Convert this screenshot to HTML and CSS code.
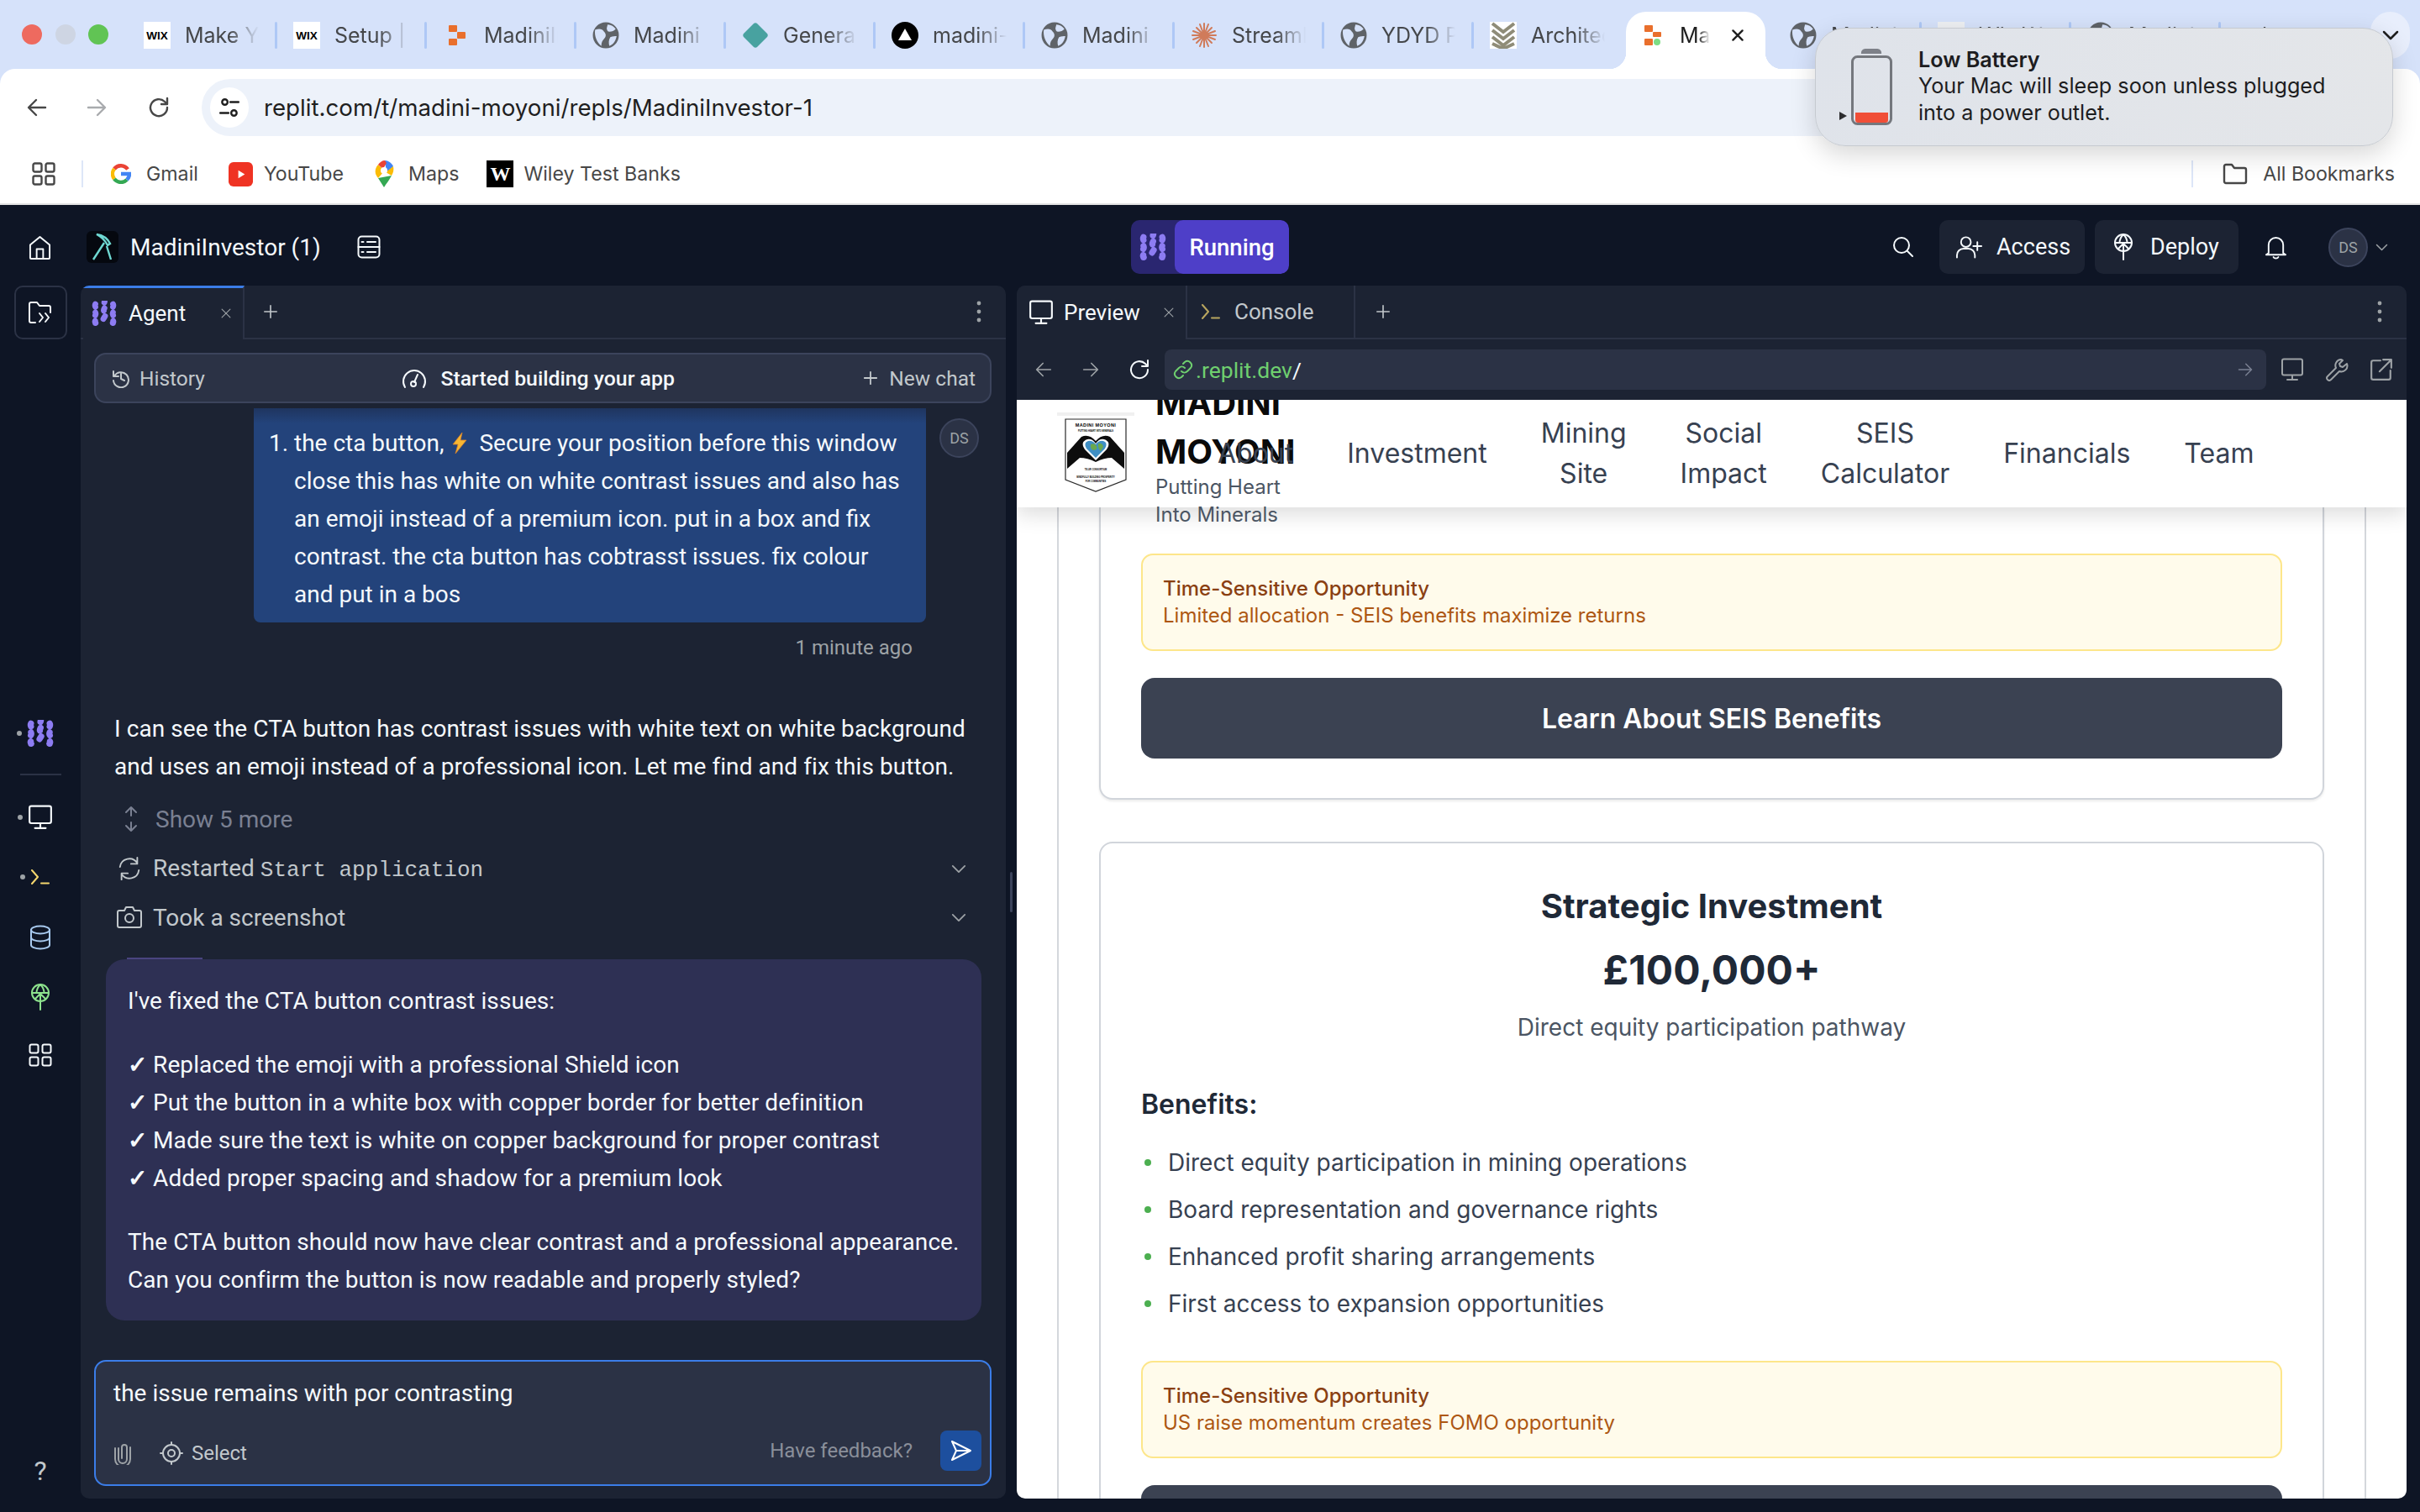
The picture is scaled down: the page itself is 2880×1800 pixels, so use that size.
FILE: index.html
```html
<!DOCTYPE html>
<html lang="en">
<head>
    <meta charset="UTF-8">
    <title>MadiniInvestor (1) - Replit</title>
    <link rel="stylesheet" href="styles.css">
</head>
<body>

<svg class="sprite" aria-hidden="true">
    <symbol id="i-agent" viewBox="0 0 30 30">
        <g fill="none" stroke="currentColor" stroke-width="6.8" stroke-linecap="round" stroke-dasharray="3.4 6.900">
            <path d="M4.5 4c-1.500 3 1.500 3.500 0 6.500s1.500 3.500 0 6.500 1.500 3.500 0 6.500 1.500 3 0 3"/>
            <path d="M15 -1c2 3-2 4 0 7s-2 4 0 7 2 4 0 7-2 4 0 7"/>
            <path d="M25.500 4c1.500 3-1.500 3.500 0 6.500s-1.500 3.500 0 6.500-1.500 3.500 0 6.500-1.500 3 0 3"/>
        </g>
    </symbol>
    <symbol id="i-home" viewBox="0 0 28 30"><path d="M2 12 14 2l12 10v16a1 1 0 0 1-1 1H3a1 1 0 0 1-1-1zM10 29V17h8v12"/></symbol>
    <symbol id="i-server" viewBox="0 0 28 28"><rect x="1.5" y="1.5" width="25" height="25" rx="4"/><path d="M1.5 14h25M5.500 8h2M12 8h10M5.500 20h2M12 20h10"/></symbol>
    <symbol id="i-folder" viewBox="0 0 30 26"><path d="M9 25H4a2 2 0 0 1-2-2V3a2 2 0 0 1 2-2h7l3 4h11a2 2 0 0 1 2 2v6M14 14l4 5-4 5M21 14l4 5-4 5"/></symbol>
    <symbol id="i-plus" viewBox="0 0 20 20"><path d="M10 2v16M2 10h16"/></symbol>
    <symbol id="i-close" viewBox="0 0 20 20"><path d="m3 3 14 14M17 3 3 17"/></symbol>
    <symbol id="i-more" viewBox="0 0 6 26"><g fill="currentColor" stroke="none"><circle cx="3" cy="3" r="2.4"/><circle cx="3" cy="13" r="2.4"/><circle cx="3" cy="23" r="2.4"/></g></symbol>
    <symbol id="i-history" viewBox="0 0 24 24"><path d="M3 4v6h6M4 10a9 9 0 1 1-1 5M12 7v6l4 2"/></symbol>
    <symbol id="i-gauge" viewBox="0 0 30 26"><path d="M4 24A13 13 0 1 1 26 24M19 9l-4 9"/><circle cx="14" cy="20" r="3"/></symbol>
    <symbol id="i-monitor" viewBox="0 0 28 28"><rect x="2" y="1.5" width="24" height="19" rx="2"/><path d="M14 21v4M8 26h12"/></symbol>
    <symbol id="i-term" viewBox="0 0 24 18"><path d="m2 1 7 8-7 8M13 16.500h9"/></symbol>
    <symbol id="i-db" viewBox="0 0 26 30"><ellipse cx="13" cy="6" rx="11" ry="4.5"/><path d="M2 6v18c0 2.500 5 4.500 11 4.500S24 26.500 24 24V6M2 15c0 2.500 5 4.500 11 4.500S24 17.500 24 15"/></symbol>
    <symbol id="i-deploy" viewBox="0 0 24 32"><circle cx="12" cy="11" r="10"/><path d="M2 11h20M12 1c-3 3-4.500 6-4.500 10M12 1c3 3 4.500 6 4.500 10M12 31V12M6 18l6-6 6 6"/></symbol>
    <symbol id="i-grid" viewBox="0 0 28 28"><rect x="1.5" y="1.5" width="10" height="10" rx="2"/><rect x="16.5" y="1.5" width="10" height="10" rx="2"/><rect x="1.5" y="16.5" width="10" height="10" rx="2"/><rect x="16.5" y="16.5" width="10" height="10" rx="2"/></symbol>
    <symbol id="i-updown" viewBox="0 0 18 32"><path d="M9 2v10M3 8l6-6 6 6M9 20v10M3 24l6 6 6-6"/></symbol>
    <symbol id="i-restart" viewBox="0 0 32 32"><path d="M4 14A12 12 0 0 1 26 9M28 18A12 12 0 0 1 6 23M26 2v8h-8M6 30v-8h8"/></symbol>
    <symbol id="i-camera" viewBox="0 0 32 28"><path d="M4 6h6l2-4h8l2 4h6a2 2 0 0 1 2 2v16a2 2 0 0 1-2 2H4a2 2 0 0 1-2-2V8a2 2 0 0 1 2-2z"/><circle cx="16" cy="15" r="5"/></symbol>
    <symbol id="i-chev" viewBox="0 0 20 12"><path d="m2 2 8 8 8-8"/></symbol>
    <symbol id="i-clip" viewBox="0 0 22 28"><path d="M6 8v13a5 5 0 0 0 10 0V7a3 3 0 0 0-6 0v13"/><path d="M2 8v13a9 9 0 0 0 18 0V7"/></symbol>
    <symbol id="i-target" viewBox="0 0 28 28"><circle cx="14" cy="14" r="10"/><circle cx="14" cy="14" r="4"/><path d="M14 1v3M14 24v3M1 14h3M24 14h3"/></symbol>
    <symbol id="i-send" viewBox="0 0 28 28"><path d="M3 3 25 14 3 25l5-11zM8 14h17"/></symbol>
    <symbol id="i-search" viewBox="0 0 26 26"><circle cx="11" cy="11" r="9"/><path d="m18 18 6 6"/></symbol>
    <symbol id="i-user-plus" viewBox="0 0 34 28"><circle cx="13" cy="8" r="6"/><path d="M2 27v-3a8 8 0 0 1 8-8h6a8 8 0 0 1 8 8v3M27 8v10M22 13h10"/></symbol>
    <symbol id="i-bell" viewBox="0 0 28 30"><path d="M5 22V12a9 9 0 0 1 18 0v10l3 2H2zM11 27c1 2 5 2 6 0"/></symbol>
    <symbol id="i-back" viewBox="0 0 24 24"><path d="M22 12H3M11 3l-9 9 9 9"/></symbol>
    <symbol id="i-reload" viewBox="0 0 28 28"><path d="M24 14a10 10 0 1 1-3-7l3 3M24 3v7h-7"/></symbol>
    <symbol id="i-link" viewBox="0 0 24 24"><path d="M10 14a5 5 0 0 0 7 0l4-4a5 5 0 0 0-7-7l-2 2M14 10a5 5 0 0 0-7 0l-4 4a5 5 0 0 0 7 7l2-2"/></symbol>
    <symbol id="i-wrench" viewBox="0 0 28 28"><path d="M19 2a7 7 0 0 0-6 10L3 22a2.500 2.500 0 0 0 4 4l10-10a7 7 0 0 0 9-9l-5 4-3-1-1-3 4-4a7 7 0 0 0-2-1z"/></symbol>
    <symbol id="i-external" viewBox="0 0 26 26"><path d="M12 3H4a2 2 0 0 0-2 2v17a2 2 0 0 0 2 2h17a2 2 0 0 0 2-2v-8M15 2h9v9M24 2 11 15"/></symbol>
    <symbol id="i-globe" viewBox="0 0 30 30"><circle cx="15" cy="15" r="14.5" fill="#5f6368" stroke="none"/><path fill="#d6e2fa" stroke="none" d="M3 9c5-2 8-1 10 2 2 2 3 5 0 8-2 2-3 4-3 8-5-4-8-11-7-18zM17 3c4 0 7 2 9 5-2 2-4 3-7 3-2 0-3-2-3-4zM20 17c3-1 5-1 7-1-1 5-3 9-8 11-1-3-1-7 1-10z"/></symbol>
    <symbol id="i-replit" viewBox="0 0 22 24"><g fill="#e96f2c"><rect x="0" y="0" width="10" height="8" rx="1"/><rect x="10" y="8" width="10" height="8" rx="1"/><rect x="0" y="16" width="10" height="8" rx="1"/></g></symbol>
</svg>

<!-- browser chrome -->
<header class="browser">
    <div class="tabstrip">
        <div class="lights"><i class="red"></i><i class="grey"></i><i class="green"></i></div>

        <div class="tab"><span class="fav fav-wix">WIX</span><span class="tab-title">Make Yo</span></div>
        <div class="tab"><span class="fav fav-wix">WIX</span><span class="tab-title">Setup |</span></div>
        <div class="tab"><svg class="fav"><use href="#i-replit" x="7" y="4" width="22" height="24"/></svg><span class="tab-title">MadiniIn</span></div>
        <div class="tab"><svg class="fav"><use href="#i-globe"/></svg><span class="tab-title">Madini I</span></div>
        <div class="tab">
            <svg class="fav" viewBox="0 0 32 32"><path fill="#48a2a0" d="M14 2c1-1 3-1 4 0l12 12c1 1 1 3 0 4L18 30c-1 1-3 1-4 0L2 18c-1-1-1-3 0-4z"/></svg>
            <span class="tab-title">General</span>
        </div>
        <div class="tab">
            <svg class="fav" viewBox="0 0 32 32"><circle cx="16" cy="16" r="16" fill="#000"/><path fill="#fff" d="m16 8 8 14H8z"/></svg>
            <span class="tab-title">madini-</span>
        </div>
        <div class="tab"><svg class="fav"><use href="#i-globe"/></svg><span class="tab-title">Madini I</span></div>
        <div class="tab">
            <svg class="fav" viewBox="0 0 32 32" stroke="#d07b5a" stroke-width="2" stroke-linecap="round"><path d="M16 2v28M2 16h28M7 7l18 18M25 7 7 25M11 3l10 26M21 3l-10 26M3 11l26 10M29 11 3 21"/></svg>
            <span class="tab-title">Streaml</span>
        </div>
        <div class="tab"><svg class="fav"><use href="#i-globe"/></svg><span class="tab-title">YDYD P</span></div>
        <div class="tab no-sep">
            <svg class="fav fav-white" viewBox="0 0 32 32" fill="none" stroke="#8f8c78" stroke-width="4"><path d="M3 2l13 10L29 2M3 10l13 10 13-10M3 18l13 10 13-10M3 26l13 6 13-6"/></svg>
            <span class="tab-title">Architec</span>
        </div>

        <div class="tab-active">
            <svg class="fav-small" viewBox="0 0 22 24"><g fill="#e96f2c"><rect width="10" height="8" rx="1"/><rect x="10" y="8" width="10" height="6" rx="1"/><rect y="16" width="10" height="8" rx="1"/></g><circle cx="15" cy="20" r="4" fill="#7ddc84"/></svg>
            <span class="tab-title">Mac</span>
            <svg class="ic tab-x"><use href="#i-close"/></svg>
        </div>

        <div class="tab after-active"><svg class="fav"><use href="#i-globe"/></svg><span class="tab-title">Madini</span></div>
        <div class="tab"><span class="fav fav-blank"></span><span class="tab-title">Wix W</span></div>
        <div class="tab"><svg class="fav"><use href="#i-globe"/></svg><span class="tab-title">Madini</span></div>
        <div class="tab no-sep"><span class="tab-title tab-hidden">l</span></div>

        <div class="tab-menu"><svg class="ic"><use href="#i-chev"/></svg></div>
    </div>

    <div class="navbar">
        <svg class="ic nav-ic"><use href="#i-back"/></svg>
        <svg class="ic nav-ic fwd"><use href="#i-back"/></svg>
        <svg class="ic nav-ic reload"><use href="#i-reload"/></svg>
        <div class="omnibox">
            <span class="site-info">
                <svg viewBox="0 0 24 24" class="ic"><circle cx="7" cy="6" r="3"/><path d="M13 6h9M2 18h9"/><circle cx="17" cy="18" r="3"/></svg>
            </span>
            <span class="url">replit.com/t/madini-moyoni/repls/MadiniInvestor-1</span>
        </div>
    </div>

    <div class="bookmarks">
        <svg class="ic bm-apps"><use href="#i-grid"/></svg>
        <span class="bm-sep"></span>
        <a class="bm bm-gmail">
            <svg class="bm-ic" viewBox="0 0 24 24" fill="none" stroke-width="4.5">
                <path stroke="#ea4335" d="M20 6.500A10 10 0 0 0 4 6"/><path stroke="#fbbc05" d="M4 6a10 10 0 0 0 0 12"/><path stroke="#34a853" d="M4 18a10 10 0 0 0 15 1"/><path stroke="#4285f4" d="M19 19c2-2 3-4 3-7H12"/>
            </svg>Gmail</a>
        <a class="bm bm-yt">
            <svg class="bm-ic yt" viewBox="0 0 30 30"><rect width="30" height="30" rx="6" fill="#ef3323"/><path fill="#fff" d="m12 10 8 5-8 5z"/></svg>YouTube</a>
        <a class="bm bm-maps">
            <svg class="bm-ic maps" viewBox="0 0 24 32">
                <path fill="#34a853" d="M5 21 12 32c3-5 6-8 9-14z"/><path fill="#fbbc05" d="M2 16c1 2 2 4 3 5l8-9-8-7c-3 3-4 7-3 11z"/><path fill="#4285f4" d="M13 0c4 0 8 3 10 7l-8 8z"/><path fill="#ea4335" d="M5 5c2-3 5-5 8-5l2 3-4 7z"/><path fill="#fbbc05" d="M23 7c1 4 0 8-2 11l-7-4z"/><circle cx="12" cy="12" r="4" fill="#fff"/>
            </svg>Maps</a>
        <a class="bm"><span class="bm-wiley">W</span>Wiley Test Banks</a>
        <span class="bm-sep bm-sep-end"></span>
        <a class="bm bm-all">
            <svg class="ic bm-folder" viewBox="0 0 30 26"><path d="M2 4a2 2 0 0 1 2-2h7l3 4h12a2 2 0 0 1 2 2v14a2 2 0 0 1-2 2H4a2 2 0 0 1-2-2z"/></svg>All Bookmarks</a>
    </div>
</header>

<!-- low battery notification -->
<aside class="notice">
    <svg class="battery" viewBox="0 0 64 92">
        <path fill="#7d8088" d="M31 0h14a5 5 0 0 1 5 6H26a5 5 0 0 1 5-6z"/>
        <rect x="15.5" y="9.5" width="46" height="80" rx="6" fill="none" stroke="#74777d" stroke-width="3"/>
        <path fill="#f04e37" d="M19 76h39v9a3 3 0 0 1-3 3H22a3 3 0 0 1-3-3z"/>
        <path fill="#2c2c2e" d="m0 75 9 5-9 5z"/>
    </svg>
    <div>
        <p class="notice-title">Low Battery</p>
        <p class="notice-body">Your Mac will sleep soon unless plugged<br>into a power outlet.</p>
    </div>
</aside>

<!-- replit workspace -->
<div class="app">
    <div class="topbar">
        <div class="top-left">
            <svg class="ic ic-home"><use href="#i-home"/></svg>
            <span class="repl-logo">
                <svg viewBox="0 0 38 38" fill="none" stroke="#6fd8d2" stroke-width="2.4"><path d="M12 4c7 1 13 5 16 11l-3 2C22 11 18 7 12 4zM21 14 8 34M24 18l5 16"/></svg>
            </span>
            <span class="repl-name">MadiniInvestor (1)</span>
            <svg class="ic ic-server"><use href="#i-server"/></svg>
        </div>

        <div class="run-pill">
            <span class="run-ic"><svg><use href="#i-agent"/></svg></span>
            <span class="run-label">Running</span>
        </div>

        <div class="top-right">
            <svg class="ic ic-search"><use href="#i-search"/></svg>
            <div class="top-btn"><svg class="ic ic-access"><use href="#i-user-plus"/></svg>Access</div>
            <div class="top-btn btn-deploy"><svg class="ic ic-deploy"><use href="#i-deploy"/></svg>Deploy</div>
            <svg class="ic ic-bell"><use href="#i-bell"/></svg>
            <span class="avatar avatar-top">DS</span>
            <svg class="ic ic-chev-top"><use href="#i-chev"/></svg>
        </div>
    </div>

    <div class="workspace">
        <nav class="rail">
            <div class="rail-tile"><svg class="ic"><use href="#i-folder"/></svg></div>
            <div class="rail-item dot agent-link"><svg><use href="#i-agent"/></svg></div>
            <div class="rail-line"></div>
            <div class="rail-item dot monitor-link"><svg class="ic"><use href="#i-monitor"/></svg></div>
            <div class="rail-item dot term-link"><svg class="ic"><use href="#i-term"/></svg></div>
            <div class="rail-item db-link"><svg class="ic"><use href="#i-db"/></svg></div>
            <div class="rail-item deploy-link"><svg class="ic"><use href="#i-deploy"/></svg></div>
            <div class="rail-item grid-link"><svg class="ic"><use href="#i-grid"/></svg></div>
            <div class="rail-help">?</div>
        </nav>

        <section class="panel agent-panel">
            <div class="panel-tabs">
                <div class="ptab agent-tab">
                    <svg class="agent-ic"><use href="#i-agent"/></svg>
                    <span>Agent</span>
                    <svg class="ic ptab-x"><use href="#i-close"/></svg>
                </div>
                <svg class="ic ptab-plus"><use href="#i-plus"/></svg>
                <svg class="ic ptab-more"><use href="#i-more"/></svg>
            </div>

            <div class="history-bar">
                <span class="hb-side"><svg class="ic"><use href="#i-history"/></svg>History</span>
                <span class="hb-title"><svg class="ic hb-gauge"><use href="#i-gauge"/></svg>Started building your app</span>
                <span class="hb-side"><svg class="ic hb-plus"><use href="#i-plus"/></svg>New chat</span>
            </div>

            <div class="msg-row">
                <div class="bubble">
                    <ol>
                        <li>the cta button,<svg class="bolt" viewBox="0 0 21 25"><path fill="#f7b733" stroke="#d9822b" stroke-width="0.8" d="M14 0 3 14h6L6 25 19 9h-7z"/></svg> Secure your position before this window close this has white on white contrast issues and also has an emoji instead of a premium icon. put in a box and fix contrast. the cta button has cobtrasst issues. fix colour and put in a bos</li>
                    </ol>
                </div>
                <span class="avatar avatar-msg">DS</span>
            </div>
            <p class="msg-time">1 minute ago</p>

            <p class="agent-text">I can see the CTA button has contrast issues with white text on white background<br>and uses an emoji instead of a professional icon. Let me find and fix this button.</p>

            <div class="step step-more"><svg class="ic step-ud"><use href="#i-updown"/></svg>Show 5 more</div>
            <div class="step step-restart">
                <svg class="ic step-ic"><use href="#i-restart"/></svg>
                <span>Restarted <code>Start application</code></span>
                <svg class="ic step-chev"><use href="#i-chev"/></svg>
            </div>
            <div class="step step-shot">
                <svg class="ic step-ic"><use href="#i-camera"/></svg>
                <span>Took a screenshot</span>
                <svg class="ic step-chev"><use href="#i-chev"/></svg>
            </div>

            <div class="card-tick"></div>
            <div class="agent-card">
                <p>I've fixed the CTA button contrast issues:</p>
                <p><b class="tick">✓</b> Replaced the emoji with a professional Shield icon<br>
                   <b class="tick">✓</b> Put the button in a white box with copper border for better definition<br>
                   <b class="tick">✓</b> Made sure the text is white on copper background for proper contrast<br>
                   <b class="tick">✓</b> Added proper spacing and shadow for a premium look</p>
                <p>The CTA button should now have clear contrast and a professional appearance.<br>
                   Can you confirm the button is now readable and properly styled?</p>
            </div>

            <div class="composer">
                <div class="composer-text">the issue remains with por contrasting</div>
                <div class="composer-row">
                    <svg class="ic ic-clip"><use href="#i-clip"/></svg>
                    <svg class="ic ic-target"><use href="#i-target"/></svg>
                    <span class="composer-select">Select</span>
                    <span class="composer-feedback">Have feedback?</span>
                    <span class="send-btn"><svg class="ic"><use href="#i-send"/></svg></span>
                </div>
            </div>
        </section>

        <div class="gutter"><span class="gutter-grip"></span></div>

        <section class="panel preview-panel">
            <div class="panel-tabs">
                <div class="ptab preview-tab">
                    <svg class="ic pv-monitor"><use href="#i-monitor"/></svg>
                    <span>Preview</span>
                    <svg class="ic ptab-x"><use href="#i-close"/></svg>
                </div>
                <div class="ptab console-tab">
                    <svg class="ic pv-term"><use href="#i-term"/></svg>
                    <span>Console</span>
                </div>
                <svg class="ic ptab-plus"><use href="#i-plus"/></svg>
                <svg class="ic ptab-more"><use href="#i-more"/></svg>
            </div>

            <div class="pv-urlrow">
                <svg class="ic pv-nav"><use href="#i-back"/></svg>
                <svg class="ic pv-nav pv-fwd"><use href="#i-back"/></svg>
                <svg class="ic pv-reload"><use href="#i-reload"/></svg>
                <div class="pv-url">
                    <svg class="ic pv-link"><use href="#i-link"/></svg>
                    <span class="pv-host">.replit.dev</span><span class="pv-path">/</span>
                    <svg class="ic pv-go"><use href="#i-back"/></svg>
                </div>
                <svg class="ic pv-tool"><use href="#i-monitor"/></svg>
                <svg class="ic pv-tool"><use href="#i-wrench"/></svg>
                <svg class="ic pv-tool"><use href="#i-external"/></svg>
            </div>

            <!-- the previewed site -->
            <div class="site">
                <div class="site-header">
                    <div class="logo-box">
                        <svg class="logo" viewBox="0 0 74 88">
                            <path d="M1 1h72v72L37 87 1 73z" fill="#fff" stroke="#2a2a2a" stroke-width="1.2"/>
                            <text x="37" y="10" class="logo-t1">MADINI MOYONI</text>
                            <text x="37" y="16" class="logo-t2">PUTTING HEART INTO MINERALS</text>
                            <path fill="#0d0d0d" d="M3 41 20 22q9-4 17 5 8-9 17-5l17 19v19L56 47q-9 0-19 5-10-5-19-5L3 60z"/>
                            <path fill="#fff" d="M37 50 24 37q-6-9 3-12 6-1 10 5 4-6 10-5 9 3 3 12z"/>
                            <path fill="#3f8fc4" d="M37 47 26 36q-4-7 2-9 5-1 9 4 4-5 9-4 6 2 2 9z"/>
                            <path fill="#6aa84f" d="M31 31q5-2 7 2t-3 5q-5-1-4-7zM40 30q5-1 6 4l-3 5q-4-3-3-9z"/>
                            <text x="37" y="62" class="logo-t2">TE-UR CONSORTIUM</text>
                            <text x="37" y="71" class="logo-t2">MINDFULLY BUILDING PROSPERITY</text>
                            <text x="37" y="76" class="logo-t2">FOR COMMUNITIES</text>
                        </svg>
                    </div>
                    <div class="brand-text">
                        <div class="brand-name">MADINI<br>MOYONI</div>
                        <div class="brand-tag">Putting Heart<br>Into Minerals</div>
                    </div>
                    <div class="site-nav">
                        <a>About</a>
                        <a>Investment</a>
                        <a>Mining<br>Site</a>
                        <a>Social<br>Impact</a>
                        <a>SEIS<br>Calculator</a>
                        <a>Financials</a>
                        <a>Team</a>
                    </div>
                </div>

                <div class="site-body">
                    <div class="site-wrap">
                        <div class="tier tier-first">
                            <div class="alert">
                                <p class="alert-title">Time-Sensitive Opportunity</p>
                                <p class="alert-text">Limited allocation - SEIS benefits maximize returns</p>
                            </div>
                            <div class="cta">Learn About SEIS Benefits</div>
                        </div>

                        <div class="tier">
                            <h3 class="tier-name">Strategic Investment</h3>
                            <div class="tier-amount">£100,000+</div>
                            <p class="tier-sub">Direct equity participation pathway</p>
                            <h4 class="tier-h4">Benefits:</h4>
                            <ul class="tier-list">
                                <li>Direct equity participation in mining operations</li>
                                <li>Board representation and governance rights</li>
                                <li>Enhanced profit sharing arrangements</li>
                                <li>First access to expansion opportunities</li>
                            </ul>
                            <div class="alert">
                                <p class="alert-title">Time-Sensitive Opportunity</p>
                                <p class="alert-text">US raise momentum creates FOMO opportunity</p>
                            </div>
                            <div class="cta"></div>
                        </div>
                    </div>
                </div>
            </div>
        </section>
    </div>
</div>

</body>
</html>
```

FILE: styles.css
```css
* {
    box-sizing: border-box;
}

html, body {
    margin: 0;
    padding: 0;
}

body {
    width: 2880px;
    height: 1800px;
    overflow: hidden;
    position: relative;
    background-color: #0e1525;
    font-family: "Inter", sans-serif;
    display: flex;
    flex-direction: column;
}

p, h3, h4, ul, ol {
    margin: 0;
    padding: 0;
}

.sprite {
    width: 0;
    height: 0;
    display: block;
}

.ic {
    fill: none;
    stroke: currentColor;
    stroke-width: 2;
    stroke-linecap: round;
    stroke-linejoin: round;
    flex-shrink: 0;
}

/* browser chrome */
.browser {
    background-color: #d6e2fa;
    flex-shrink: 0;
}

.tabstrip {
    height: 82px;
    display: flex;
    align-items: flex-start;
}

.lights {
    display: flex;
    gap: 15.5px;
    padding: 29px 23px 0 26px;
}

.lights i {
    display: block;
    width: 24px;
    height: 24px;
    border-radius: 50%;
}

.lights .red { background-color: #ee6a5f; }
.lights .grey { background-color: #ced5e3; }
.lights .green { background-color: #61c454; }

.tab {
    width: 178px;
    height: 32px;
    margin-top: 26px;
    padding-left: 19px;
    display: flex;
    align-items: center;
    gap: 17px;
    flex-shrink: 0;
    font-size: 25px;
    color: #45474a;
}

.tab::after {
    content: "";
    width: 3px;
    height: 32px;
    margin-left: auto;
    background-color: #aec8f6;
    border-radius: 2px;
    flex-shrink: 0;
}

.tab.no-sep::after {
    display: none;
}

.after-active {
    margin-left: 8px;
    padding-left: 21px;
}

.fav {
    width: 32px;
    height: 32px;
    flex-shrink: 0;
}

.fav-wix {
    background-color: #fff;
    color: #000;
    font: 700 13.5px "Liberation Sans", sans-serif;
    display: flex;
    align-items: center;
    justify-content: center;
}

.fav-white {
    background-color: #fff;
}

.fav-blank {
    background-color: #eef0f3;
}

.tab-title {
    width: 88px;
    overflow: hidden;
    white-space: nowrap;
    -webkit-mask-image: linear-gradient(90deg, #000 60%, transparent 100%);
    mask-image: linear-gradient(90deg, #000 60%, transparent 100%);
}

.tab-hidden {
    margin-left: 30px;
}

.tab-active {
    position: relative;
    width: 166px;
    height: 68px;
    margin: 14px 0 0 3px;
    padding: 0 0 13px 22px;
    background-color: #fff;
    border-radius: 24px 24px 0 0;
    display: flex;
    align-items: center;
    flex-shrink: 0;
    font-size: 25px;
    color: #1f1f1f;
}

.tab-active::before,
.tab-active::after {
    content: "";
    position: absolute;
    bottom: 0;
    width: 20px;
    height: 20px;
}

.tab-active::before {
    left: -20px;
    background: radial-gradient(circle at 0 0, transparent 20px, #fff 20.5px);
}

.tab-active::after {
    right: -20px;
    background: radial-gradient(circle at 100% 0, transparent 20px, #fff 20.5px);
}

.fav-small {
    width: 22px;
    height: 24px;
    flex-shrink: 0;
}

.tab-active .tab-title {
    width: 36px;
    margin-left: 20px;
}

.tab-x {
    width: 16px;
    height: 16px;
    margin-left: 25px;
    stroke-width: 3;
    color: #1f1f1f;
}

.tab-menu {
    width: 56px;
    height: 56px;
    margin: 14px 12px 0 auto;
    border-radius: 28px;
    background-color: #e8eefc;
    display: flex;
    align-items: center;
    justify-content: center;
    color: #1f1f1f;
}

.tab-menu .ic {
    width: 20px;
    height: 12px;
    stroke-width: 2.5;
}

.navbar {
    height: 80px;
    padding: 12px 0 0 32px;
    background-color: #fff;
    border-radius: 18px 18px 0 0;
    display: flex;
    align-items: center;
    color: #474747;
}

.nav-ic {
    width: 24px;
    height: 24px;
    stroke-width: 2.4;
    margin-right: 47px;
}

.nav-ic.fwd {
    color: #a9abae;
    transform: scaleX(-1);
}

.nav-ic.reload {
    width: 28px;
    height: 28px;
    margin-right: 37px;
    margin-left: 1px;
}

.omnibox {
    width: 2560px;
    height: 68px;
    margin-right: -200px;
    background-color: #edf2fa;
    border-radius: 34px;
    display: flex;
    align-items: center;
    padding-left: 10px;
}

.site-info {
    width: 46px;
    height: 48px;
    border-radius: 50%;
    background-color: #fff;
    display: flex;
    align-items: center;
    justify-content: center;
    color: #1f1f1f;
}

.site-info .ic {
    width: 26px;
    height: 26px;
    stroke-width: 2.2;
}

.url {
    margin-left: 18px;
    font-size: 27.7px;
    color: #1f1f1f;
}

.bookmarks {
    height: 82px;
    padding: 10px 0 0 38px;
    background-color: #fff;
    border-bottom: 2px solid #e3e3e3;
    display: flex;
    align-items: center;
    font-size: 23.2px;
    color: #474747;
}

.bm-apps {
    width: 28px;
    height: 28px;
    stroke-width: 2.4;
}

.bm-sep {
    width: 2px;
    height: 32px;
    margin: 0 33px 0 31px;
    background-color: #dde6f8;
}

.bm {
    display: flex;
    align-items: center;
    white-space: nowrap;
}

.bm-gmail {
    margin-right: 36px;
}

.bm-yt {
    margin-right: 36px;
}

.bm-maps {
    margin-right: 33px;
}

.bm-ic {
    width: 24px;
    height: 24px;
    margin-right: 18px;
}

.bm-ic.yt {
    width: 29px;
    height: 29px;
    margin-right: 13px;
}

.bm-ic.maps {
    height: 32px;
    margin-right: 17px;
}

.bm-wiley {
    width: 32px;
    height: 32px;
    margin-right: 12px;
    background-color: #000;
    color: #fff;
    font: 700 24px "Liberation Serif", serif;
    display: flex;
    align-items: center;
    justify-content: center;
}

.bm-sep-end {
    margin: 0 35px 0 auto;
}

.bm-all {
    margin-right: 30px;
}

.bm-folder {
    width: 30px;
    height: 26px;
    margin-right: 18px;
    stroke-width: 2.4;
}

/* notification */
.notice {
    position: absolute;
    top: 33px;
    left: 2160px;
    width: 688px;
    height: 141px;
    padding: 21px 30px 0 28px;
    border-radius: 36px;
    border: 1px solid #c6cad0;
    background: linear-gradient(110deg, #dfe3ea, #e4e6e9);
    box-shadow: 0 10px 30px rgba(0, 0, 0, 0.16);
    display: flex;
    gap: 30px;
    z-index: 5;
    color: #1d1d1f;
    font-size: 25.2px;
    line-height: 32px;
}

.battery {
    width: 64px;
    height: 92px;
    margin-top: 3px;
    flex-shrink: 0;
}

.notice-title {
    font-weight: 600;
}

.notice-body {
    margin-top: -1px;
}

/* workspace */
.app {
    flex: 1;
    min-height: 0;
    display: flex;
    flex-direction: column;
    font-family: "Roboto", sans-serif;
    color: #f5f9fc;
}

.topbar {
    height: 96px;
    padding-top: 4px;
    display: grid;
    grid-template-columns: 1fr auto 1fr;
    align-items: center;
    flex-shrink: 0;
}

.top-left {
    display: flex;
    align-items: center;
    padding-left: 34px;
}

.ic-home {
    width: 27px;
    height: 29px;
    margin-right: 42px;
}

.repl-logo {
    width: 38px;
    height: 38px;
    background-color: #05080f;
    border-radius: 6px;
    margin-right: 14px;
}

.repl-logo svg {
    display: block;
}

.repl-name {
    font-size: 28px;
    width: 270px;
}

.ic-server {
    width: 28px;
    height: 28px;
}

.run-pill {
    height: 64px;
    border-radius: 10px;
    background-color: #2a2670;
    display: flex;
    overflow: hidden;
}

.run-ic {
    width: 52px;
    display: flex;
    align-items: center;
    justify-content: center;
    color: #8d7cf2;
}

.run-ic svg {
    width: 32px;
    height: 32px;
}

.run-label {
    width: 136px;
    background-color: #4e3fc8;
    border-radius: 10px;
    display: flex;
    align-items: center;
    justify-content: center;
    font-size: 27.5px;
    font-weight: 500;
    color: #fff;
}

.top-right {
    display: flex;
    align-items: center;
    justify-content: flex-end;
    padding-right: 38px;
}

.ic-search {
    width: 26px;
    height: 26px;
    margin-right: 30px;
}

.top-btn {
    width: 173px;
    height: 64px;
    border-radius: 10px;
    background-color: #1c2333;
    display: flex;
    align-items: center;
    padding-left: 19px;
    gap: 16px;
    font-size: 27px;
}

.btn-deploy {
    width: 171px;
    margin-left: 12px;
    padding-left: 21px;
    gap: 19px;
}

.ic-access {
    width: 33px;
    height: 28px;
}

.ic-deploy {
    width: 26px;
    height: 32px;
}

.ic-bell {
    width: 27px;
    height: 29px;
    margin: 0 49px 0 31px;
}

.avatar {
    border-radius: 50%;
    background-color: #2b3245;
    border: 2px solid #3c445c;
    color: #9da2a6;
    display: flex;
    align-items: center;
    justify-content: center;
    font-size: 18px;
    flex-shrink: 0;
}

.avatar-top {
    width: 47px;
    height: 47px;
}

.ic-chev-top {
    width: 15px;
    height: 9px;
    margin-left: 9px;
    color: #9da2a6;
}

.workspace {
    flex: 1;
    min-height: 0;
    display: flex;
    padding-bottom: 16px;
}

.rail {
    width: 96px;
    display: flex;
    flex-direction: column;
    align-items: center;
    flex-shrink: 0;
}

.rail-tile {
    width: 63px;
    height: 64px;
    border: 2px solid #2b3245;
    border-radius: 10px;
    display: flex;
    align-items: center;
    justify-content: center;
}

.rail-tile .ic {
    width: 30px;
    height: 26px;
}

.rail-item {
    position: relative;
    display: flex;
    flex-shrink: 0;
}

.rail-item.dot::before {
    content: "";
    position: absolute;
    left: -12px;
    top: 50%;
    width: 6px;
    height: 6px;
    margin-top: -3px;
    border-radius: 50%;
    background-color: #9da2a6;
}

.agent-link {
    margin-top: 453px;
    color: #8d7cf2;
}

.agent-link svg {
    width: 32px;
    height: 32px;
}

.rail-line {
    width: 49px;
    height: 2px;
    margin-top: 32px;
    background-color: #2b3245;
}

.monitor-link {
    margin-top: 35px;
}

.monitor-link .ic {
    width: 30px;
    height: 30px;
}

.term-link {
    margin-top: 47px;
    color: #f5d76e;
}

.term-link .ic {
    width: 24px;
    height: 18px;
}

.db-link {
    margin-top: 48px;
    color: #a8caf0;
}

.db-link .ic {
    width: 26px;
    height: 30px;
}

.deploy-link {
    margin-top: 40px;
    color: #8de28d;
}

.deploy-link .ic {
    width: 24px;
    height: 32px;
}

.grid-link {
    margin-top: 39px;
}

.grid-link .ic {
    width: 28px;
    height: 28px;
}

.rail-help {
    margin-top: auto;
    margin-bottom: 14px;
    font-size: 32px;
    color: #c2c8cc;
}

.panel {
    background-color: #1c2333;
    border-radius: 10px;
    display: flex;
    flex-direction: column;
    min-width: 0;
    overflow: hidden;
}

.agent-panel {
    width: 1101px;
    flex-shrink: 0;
}

.gutter {
    width: 13px;
    flex-shrink: 0;
    display: flex;
    justify-content: center;
    padding-top: 698px;
}

.gutter-grip {
    width: 3px;
    height: 48px;
    background-color: #3c445c;
    border-radius: 2px;
}

.preview-panel {
    width: 1654px;
    flex-shrink: 0;
}

.panel-tabs {
    height: 64px;
    display: flex;
    align-items: center;
    border-bottom: 2px solid #2b3245;
    flex-shrink: 0;
    font-size: 26px;
}

.ptab {
    height: 64px;
    display: flex;
    align-items: center;
    margin-bottom: -2px;
    background-color: #1c2333;
}

.agent-tab {
    width: 192px;
    margin-left: 3px;
    padding: 0 0 2px 10px;
    border-top: 3px solid #3b7de8;
    border-right: 2px solid #2b3245;
    color: #f5f9fc;
}

.agent-ic {
    width: 30px;
    height: 30px;
    margin-right: 14px;
    color: #8d7cf2;
}

.ptab-x {
    width: 14px;
    height: 14px;
    color: #9da2a6;
    stroke-width: 1.6;
    margin-left: auto;
    margin-right: 13px;
}

.ptab-plus {
    width: 18px;
    height: 18px;
    margin-left: 22px;
    color: #c2c8cc;
    stroke-width: 1.8;
}

.ptab-more {
    width: 6px;
    height: 26px;
    margin-left: auto;
    margin-right: 29px;
    color: #9da2a6;
}

.history-bar {
    height: 60px;
    margin: 16px 17px 0 16px;
    padding: 0 17px 0 18px;
    background-color: #2b3245;
    border: 2px solid #3c445c;
    border-radius: 14px;
    display: flex;
    align-items: center;
    justify-content: space-between;
    flex-shrink: 0;
    font-size: 24.5px;
    color: #c2c8cc;
}

.hb-side,
.hb-title {
    display: flex;
    align-items: center;
}

.hb-side .ic {
    width: 24px;
    height: 24px;
    margin-right: 10px;
}

.hb-side .hb-plus {
    width: 18px;
    height: 18px;
    margin-right: 13px;
}

.hb-title {
    margin-left: 10px;
    font-size: 24.8px;
    font-weight: 500;
    color: #f5f9fc;
}

.hb-gauge {
    width: 30px;
    height: 26px;
    margin-right: 16px;
}

.msg-row {
    display: flex;
    margin: 6px 32px 0 206px;
    gap: 16px;
    flex-shrink: 0;
}

.bubble {
    width: 800px;
    padding: 19px 20px 11px 48px;
    border-radius: 0 0 8px 8px;
    background: linear-gradient(180deg, #1f3560, #23437b 18px);
    font-size: 28px;
    line-height: 45px;
    color: #f5f9fc;
}

.bolt {
    width: 21px;
    height: 25px;
    margin: 0 7px;
    vertical-align: -3px;
}

.avatar-msg {
    width: 47px;
    height: 47px;
    margin-top: 12px;
}

.msg-time {
    margin: 14px 111px 0 0;
    text-align: right;
    font-size: 24px;
    line-height: 32px;
    color: #9da2a6;
}

.agent-text {
    margin: 58px 0 0 40px;
    font-size: 28px;
    line-height: 45px;
    letter-spacing: 0.07px;
    white-space: nowrap;
}

.step {
    height: 32px;
    margin-top: 27px;
    padding: 0 47px 0 42px;
    display: flex;
    align-items: center;
    font-size: 28px;
    color: #c2c8cc;
    flex-shrink: 0;
}

.step-more {
    margin-top: 24px;
    padding-left: 51px;
    color: #7a8092;
}

.step-shot {
    margin-top: 26px;
}

.step-ud {
    width: 18px;
    height: 32px;
    margin-right: 20px;
}

.step-ic {
    width: 32px;
    height: 30px;
    margin-right: 12px;
}

.step code {
    font-family: "Liberation Mono", monospace;
    font-size: 26px;
}

.step-chev {
    width: 18px;
    height: 11px;
    margin-left: auto;
    color: #9da2a6;
}

.card-tick {
    width: 90px;
    height: 2px;
    margin: 32px 0 0 55px;
    background-color: #4a4580;
    flex-shrink: 0;
}

.agent-card {
    margin: 0 29px 0 30px;
    padding: 27px 20px 26px 26px;
    border-radius: 22px;
    background-color: #2e3054;
    font-size: 28px;
    line-height: 45px;
    letter-spacing: 0.07px;
    flex-shrink: 0;
    white-space: nowrap;
}

.agent-card p + p {
    margin-top: 31px;
}

.tick {
    font-weight: 700;
}

.composer {
    height: 150px;
    margin: auto 17px 15px 16px;
    padding: 22px 10px 16px 21px;
    background-color: #2b3245;
    border: 2px solid #3b7de8;
    border-radius: 14px;
    display: flex;
    flex-direction: column;
    justify-content: space-between;
    flex-shrink: 0;
}

.composer-text {
    font-size: 28px;
    line-height: 32px;
}

.composer-row {
    display: flex;
    align-items: center;
    font-size: 24px;
    color: #c2c8cc;
}

.ic-clip {
    width: 22px;
    height: 28px;
    margin: 6px 33px 0 0;
    color: #9da2a6;
}

.ic-target {
    width: 28px;
    height: 28px;
    margin-top: 6px;
    margin-right: 10px;
    color: #c2c8cc;
}

.composer-select {
    margin-top: 6px;
}

.composer-feedback {
    margin-left: auto;
    margin-right: 33px;
    color: #8a8f9a;
}

.send-btn {
    width: 49px;
    height: 48px;
    border-radius: 8px;
    background-color: #1d4f9e;
    display: flex;
    align-items: center;
    justify-content: center;
    color: #fff;
}

.send-btn .ic {
    width: 28px;
    height: 28px;
}

/* preview panel */
.preview-tab {
    width: 201px;
    padding-left: 14px;
    color: #f5f9fc;
}

.pv-monitor {
    width: 30px;
    height: 30px;
    margin-right: 12px;
}

.preview-tab .ptab-x {
    margin-right: 13px;
}

.console-tab {
    width: 202px;
    padding-left: 16px;
    border-left: 2px solid #2b3245;
    border-right: 2px solid #2b3245;
    color: #c2c8cc;
    margin-bottom: 0;
    height: 62px;
}

.console-tab + .ptab-plus {
    margin-left: 24px;
}

.pv-term {
    width: 24px;
    height: 18px;
    margin-right: 16px;
    color: #b8a55f;
}

.pv-urlrow {
    height: 72px;
    display: flex;
    align-items: center;
    padding-left: 22px;
    flex-shrink: 0;
    color: #9da2a6;
}

.pv-nav {
    width: 20px;
    height: 20px;
    margin-right: 36px;
}

.pv-fwd {
    margin-right: 34px;
    transform: scaleX(-1);
}

.pv-reload {
    width: 28px;
    height: 28px;
    margin-right: 16px;
    color: #f5f9fc;
}

.pv-url {
    width: 1311px;
    height: 48px;
    background-color: #2b3245;
    border-radius: 8px;
    display: flex;
    align-items: center;
    padding: 0 16px 0 10px;
    font-size: 26.5px;
    margin-right: 17px;
    flex-shrink: 0;
}

.pv-link {
    width: 24px;
    height: 24px;
    color: #6fcf6f;
    margin-right: 3px;
}

.pv-host {
    color: #6fcf6f;
}

.pv-path {
    color: #f5f9fc;
}

.pv-go {
    width: 18px;
    height: 18px;
    margin-left: auto;
    transform: scaleX(-1);
    color: #7a8092;
}

.pv-tool {
    width: 28px;
    height: 28px;
    margin-right: 25px;
}

.pv-tool:last-child {
    margin-right: 0;
}

/* previewed site */
.site {
    flex: 1;
    min-height: 0;
    background-color: #fff;
    overflow: hidden;
    display: flex;
    flex-direction: column;
    border-radius: 0 0 8px 8px;
    font-family: "Inter", sans-serif;
}

.site-header {
    position: relative;
    z-index: 1;
    height: 128px;
    background-color: #fff;
    box-shadow: 0 8px 24px rgba(0, 0, 0, 0.14);
    display: flex;
    align-items: center;
    padding-left: 48px;
    flex-shrink: 0;
}

.logo-box {
    width: 92px;
    height: 96px;
    margin-top: -2px;
    border-top: 4px solid #f0f0f0;
    padding: 3px 9px 0;
    flex-shrink: 0;
}

.logo {
    display: block;
    width: 74px;
    height: 88px;
}

.logo-t1 {
    font: 700 5.5px "Liberation Sans", sans-serif;
    text-anchor: middle;
    letter-spacing: 0.4px;
}

.logo-t2 {
    font: 700 2.6px "Liberation Sans", sans-serif;
    text-anchor: middle;
}

.brand-text {
    width: 74px;
    margin-left: 25px;
    white-space: nowrap;
    flex-shrink: 0;
}

.brand-name {
    font-size: 40px;
    font-weight: 700;
    line-height: 58px;
    color: #0a0a0a;
}

.brand-tag {
    margin-top: -4px;
    font-size: 24px;
    line-height: 33px;
    color: #4b5563;
}

.site-nav {
    display: flex;
    align-items: center;
    gap: 64px;
    font-size: 32px;
    line-height: 48px;
    color: #374151;
    text-align: center;
}

.site-body {
    flex: 1;
    min-height: 0;
    overflow: hidden;
}

.site-wrap {
    margin: 0 48px;
    padding: 0 48px;
    border-left: 2px solid #d4d7dc;
    border-right: 2px solid #d4d7dc;
    height: 100%;
}

.tier {
    border: 2px solid #d1d5db;
    border-radius: 16px;
    padding: 51px 48px 47px;
    margin-top: 50px;
    background-color: #fff;
}

.tier-first {
    margin-top: 0;
    padding-top: 55px;
    border-top: none;
    border-radius: 0 0 16px 16px;
    box-shadow: 0 2px 3px rgba(0, 0, 0, 0.08);
}

.alert {
    height: 116px;
    padding: 24px;
    background-color: #fffbeb;
    border: 2px solid #fde68a;
    border-radius: 14px;
    font-size: 24px;
    line-height: 32px;
}

.alert-title {
    font-weight: 500;
    color: #8a4012;
}

.alert-text {
    color: #ad5713;
}

.cta {
    height: 96px;
    margin-top: 32px;
    background-color: #3b4252;
    border-radius: 16px;
    display: flex;
    align-items: center;
    justify-content: center;
    font-size: 32px;
    font-weight: 600;
    color: #fff;
}

.tier-name {
    font-size: 40px;
    line-height: 48px;
    font-weight: 700;
    color: #1f2937;
    text-align: center;
}

.tier-amount {
    margin-top: 22px;
    font-size: 48px;
    line-height: 60px;
    font-weight: 700;
    color: #1f2937;
    text-align: center;
}

.tier-sub {
    margin-top: 20px;
    font-size: 28px;
    line-height: 36px;
    color: #4b5563;
    text-align: center;
}

.tier-h4 {
    margin-top: 54px;
    font-size: 32px;
    line-height: 40px;
    font-weight: 600;
    color: #1f2937;
}

.tier-list {
    margin-top: 29px;
    list-style: none;
}

.tier-list li {
    display: flex;
    align-items: center;
    height: 40px;
    margin-bottom: 16px;
    font-size: 28px;
    color: #374151;
}

.tier-list li::before {
    content: "";
    width: 8px;
    height: 8px;
    margin: 0 20px 0 4px;
    border-radius: 50%;
    background-color: #4caf50;
    flex-shrink: 0;
}

.tier-list + .alert {
    margin-top: 48px;
}
```
